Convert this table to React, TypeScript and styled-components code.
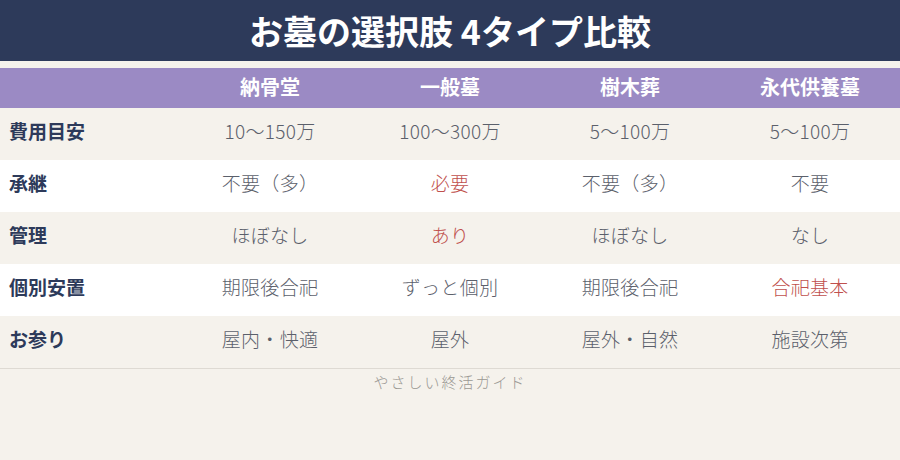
import React from 'react';
import styled, { createGlobalStyle } from 'styled-components';

const GlobalStyle = createGlobalStyle`
  html, body {
    margin: 0;
    padding: 0;
    background: #f5f2ec;
  }
  body {
    font-family: "Noto Sans CJK JP", "Noto Sans", sans-serif;
  }
  * {
    box-sizing: border-box;
  }
`

const Page = styled.div`
  width: 900px;
  height: 460px;
  background: #f5f2ec;
  display: flex;
  flex-direction: column;
`

const TitleBar = styled.header`
  height: 61px;
  background: #2d3a5a;
  color: #ffffff;
  display: flex;
  align-items: center;
  justify-content: center;
  font-size: 34px;
  font-weight: 700;
  margin-bottom: 7px;
`

const Table = styled.div`
  display: grid;
  grid-template-columns: repeat(5, 180px);
  border-bottom: 1px solid #dedad3;
`

const HeadCell = styled.div`
  height: 40px;
  padding-bottom: 4px;
  background: #9b8ac4;
  color: #ffffff;
  font-size: 20px;
  font-weight: 700;
  display: flex;
  align-items: center;
  justify-content: center;
`

const Cell = styled.div<{ $striped: boolean }>`
  height: 52px;
  padding-bottom: 7px;
  background: ${ p => p.$striped ? '#f5f2ec' : '#ffffff' };
  display: flex;
  align-items: center;
`

const LabelCell = styled(Cell)`
  padding-left: 9px;
  color: #2d3a5a;
  font-size: 19px;
  font-weight: 700;
`

const ValueCell = styled(Cell)<{ $accent?: boolean }>`
  justify-content: center;
  color: ${ p => p.$accent ? '#c0504d' : '#5b606b' };
  font-size: 19px;
  font-weight: 300;
  letter-spacing: 0.3px;
`

const Footer = styled.div`
  padding-top: 2px;
  text-align: center;
  color: #9a9893;
  font-size: 15px;
  font-weight: 300;
  letter-spacing: 2px;
`

const columns = ['納骨堂', '一般墓', '樹木葬', '永代供養墓'];

type Row = { label: string, values: string[], accent?: number };

const rows: Row[] = [
  { label: '費用目安', values: ['10〜150万', '100〜300万', '5〜100万', '5〜100万'] },
  { label: '承継', values: ['不要（多）', '必要', '不要（多）', '不要'], accent: 1 },
  { label: '管理', values: ['ほぼなし', 'あり', 'ほぼなし', 'なし'], accent: 1 },
  { label: '個別安置', values: ['期限後合祀', 'ずっと個別', '期限後合祀', '合祀基本'], accent: 3 },
  { label: 'お参り', values: ['屋内・快適', '屋外', '屋外・自然', '施設次第'] },
];

const App = () => {
  return (
    <Page>
      <GlobalStyle/>
      <TitleBar>お墓の選択肢 4タイプ比較</TitleBar>
      <Table>
        <HeadCell/>
        { columns.map(col => <HeadCell key={ col }>{ col }</HeadCell>) }
        { rows.map((row, i) => (
          <React.Fragment key={ row.label }>
            <LabelCell $striped={ i % 2 === 0 }>{ row.label }</LabelCell>
            { row.values.map((value, j) => (
              <ValueCell key={ j } $striped={ i % 2 === 0 } $accent={ row.accent === j }>
                { value }
              </ValueCell>
            )) }
          </React.Fragment>
        )) }
      </Table>
      <Footer>やさしい終活ガイド</Footer>
    </Page>
  );
};

export default App;
